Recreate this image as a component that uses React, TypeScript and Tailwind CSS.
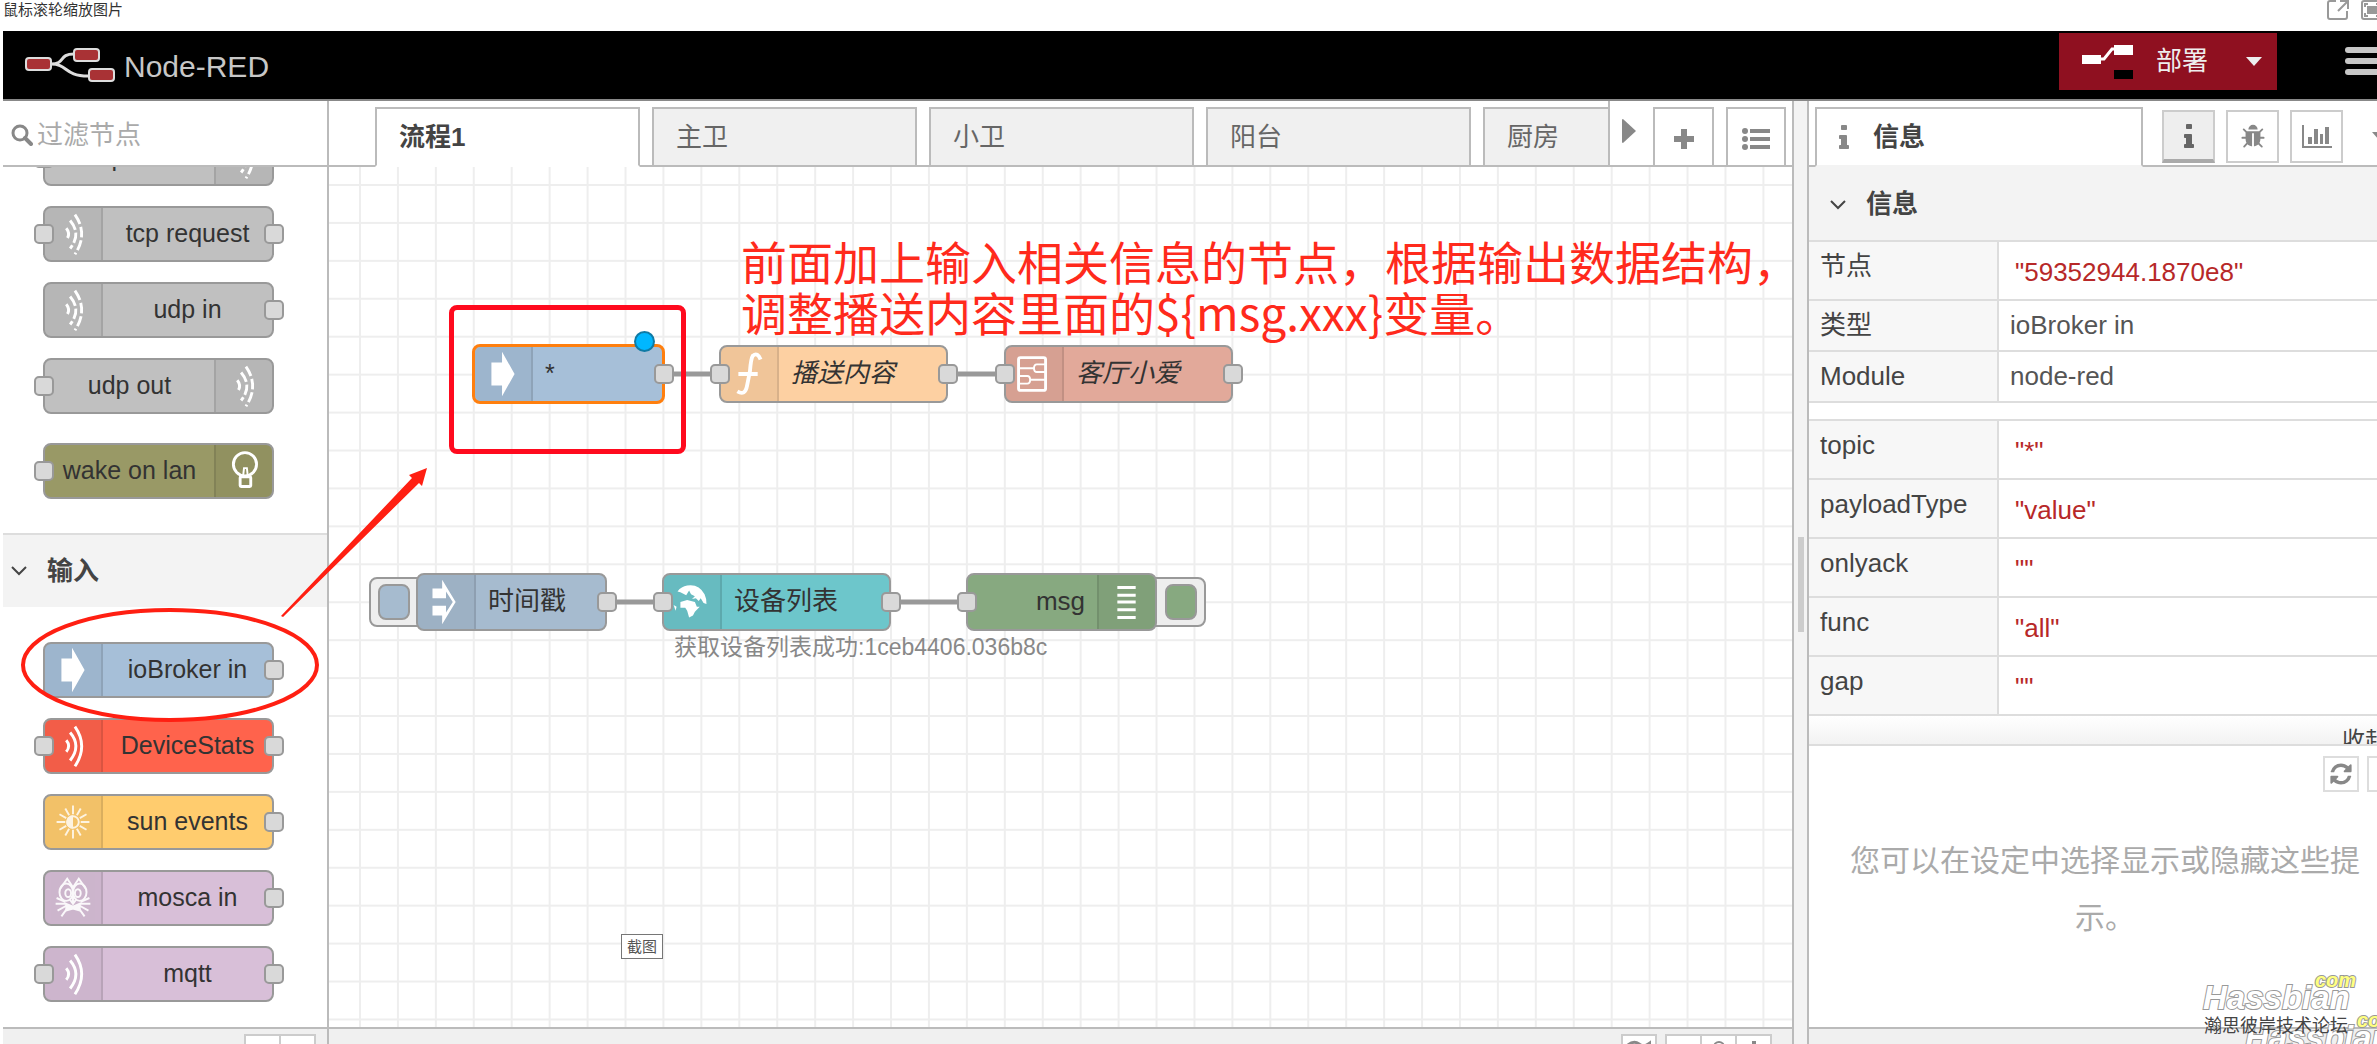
import type { ReactNode } from 'react';
import { clsx } from 'clsx';

/* ---------- node icons, drawn in a 58x54 box ---------- */

function NodeIcon({ children }: { children: ReactNode }) {
  return (
    <svg viewBox="0 0 58 54" className="h-[54px] w-[58px]" fill="none" stroke="#fff" strokeWidth="3">
      {children}
    </svg>
  );
}

const WAVES = (
  <>
    <path d="M31 7Q45 27 31 48" />
    <path d="M26 13Q38 27 26 42" />
    <path d="M22 21Q27 27 22 33" />
  </>
);

const icons: Record<string, ReactNode> = {
  waves: <NodeIcon>{WAVES}</NodeIcon>,
  dashes: (
    <NodeIcon>
      <g strokeDasharray="11 3">{WAVES}</g>
    </NodeIcon>
  ),
  arrow: (
    <NodeIcon>
      <path d="M17 15H28V4L41 27L28 50V39H17Z" fill="#fff" stroke="none" />
    </NodeIcon>
  ),
  inject: (
    <NodeIcon>
      <path
        d="M25 4L39 27L25 50V41H15V31H29V38L36 27L29 16V23H15V13H25Z"
        fill="#fff"
        stroke="none"
      />
    </NodeIcon>
  ),
  bulb: (
    <NodeIcon>
      <circle cx="30" cy="20" r="12" strokeWidth="3" />
      <rect x="25" y="33" width="11" height="10" rx="1" />
      <path d="M28 33L29 24H32L33 33" strokeWidth="2" />
    </NodeIcon>
  ),
  sun: (
    <NodeIcon>
      <g opacity="0.8">
        <circle cx="29" cy="27" r="6" strokeWidth="2" />
        <path d="M29 20A7 7 0 0 0 29 34Z" fill="#fff" stroke="none" />
        <path
          strokeWidth="2"
          d="M29 19V10M29 35V44M21 27H12M37 27H46M25 20L21 13M33 34L37 41M33 20L37 13M25 34L21 41M22 23L15 19M36 31L43 35M36 23L43 19M22 31L15 35"
        />
      </g>
    </NodeIcon>
  ),
  mosca: (
    <NodeIcon>
      <g opacity="0.9" strokeWidth="2">
        <path d="M16 17L23 7L29 16L35 7L42 17" />
        <ellipse cx="22" cy="21" rx="7" ry="9" />
        <ellipse cx="36" cy="21" rx="7" ry="9" />
        <ellipse cx="24" cy="22" rx="3" ry="4" />
        <ellipse cx="34" cy="22" rx="3" ry="4" />
        <path d="M29 18V32M26 29L29 33L32 29M12 27L21 31M11 33L22 33M13 40L22 35M46 27L37 31M47 33L36 33M45 40L36 35" />
        <path d="M22 33L29 36L36 33V40L29 38L22 40Z" fill="#fff" />
        <path d="M22 39L17 46M36 39L41 46" />
      </g>
    </NodeIcon>
  ),
  fn: (
    <NodeIcon>
      <path d="M41 12Q38 4 33 8Q31 11 30 24L27 39Q25 50 17 45M18 27H38" strokeWidth="4" />
    </NodeIcon>
  ),
  subflow: (
    <NodeIcon>
      <rect x="13" y="10" width="28" height="34" rx="2" />
      <path
        d="M13 21H29M41 17H32Q29 17 29 21T32 25H41M13 29H22Q25 29 25 33T22 37H13M25 33H41"
        strokeWidth="2"
      />
    </NodeIcon>
  ),
  globe: (
    <NodeIcon>
      <g fill="#fff" stroke="none">
        <path d="M14 16Q18 11 24 10Q36 8 42 19Q44 23 44 29L41 28L38 23L36 26L33 23L29 24L32 21L28 19L26 15L23 20L17 17Z" />
        <path d="M17 27L24 25L32 27L34 32L37 32L32 37L30 41L26 43L24 36L22 33L17 33Z" />
        <path d="M10 30L13 32L12 36Z" />
      </g>
    </NodeIcon>
  ),
  debug: (
    <NodeIcon>
      <path d="M19 12H38M19 20H38M19 27H38M19 35H38M19 43H38" />
    </NodeIcon>
  ),
};

/* ---------- flow nodes ---------- */

function Port({ side }: { side: 'left' | 'right' }) {
  return (
    <span
      className={clsx(
        'absolute top-1/2 size-5 -translate-y-1/2 rounded-[5px] border-2 border-[#999] bg-[#d9d9d9]',
        side === 'left' ? '-left-[11px]' : '-right-3',
      )}
    />
  );
}

interface FlowNodeProps {
  label: string;
  color: string;
  icon: string;
  input?: boolean;
  output?: boolean;
  iconRight?: boolean;
  selected?: boolean;
  className?: string;
  labelClassName?: string;
}

function FlowNode({
  label,
  color,
  icon,
  input,
  output,
  iconRight,
  selected,
  className,
  labelClassName,
}: FlowNodeProps) {
  return (
    <div
      className={clsx(
        'relative flex rounded-lg',
        selected ? 'border-[3px] border-[#ff7f0e]' : 'border-2 border-[#999]',
        iconRight && 'flex-row-reverse',
        color,
        className,
      )}
    >
      <span
        className={clsx(
          'flex w-[58px] shrink-0 items-center overflow-hidden border-black/10 bg-black/5',
          iconRight ? 'rounded-r-md border-l-2' : 'rounded-l-md border-r-2',
        )}
      >
        {icons[icon]}
      </span>
      <span
        className={clsx(
          'flex-1 self-center pb-0.5 whitespace-nowrap text-[25px] leading-8 text-[#333]',
          labelClassName ?? 'text-center',
        )}
      >
        {label}
      </span>
      {input && <Port side="left" />}
      {output && <Port side="right" />}
    </div>
  );
}

const networkNodes: FlowNodeProps[] = [
  { label: 'tcp out', color: 'bg-[#c0c0c0]', icon: 'dashes', input: true, iconRight: true },
  { label: 'tcp request', color: 'bg-[#c0c0c0]', icon: 'dashes', input: true, output: true },
  { label: 'udp in', color: 'bg-[#c0c0c0]', icon: 'dashes', output: true },
  { label: 'udp out', color: 'bg-[#c0c0c0]', icon: 'dashes', input: true, iconRight: true },
];

const inputNodes: FlowNodeProps[] = [
  { label: 'ioBroker in', color: 'bg-[#a6bfd8]', icon: 'arrow', output: true },
  { label: 'DeviceStats', color: 'bg-[#ff634c]', icon: 'waves', input: true, output: true },
  { label: 'sun events', color: 'bg-[#ffcc6e]', icon: 'sun', output: true },
  { label: 'mosca in', color: 'bg-[#d8bfd8]', icon: 'mosca', output: true },
  { label: 'mqtt', color: 'bg-[#d8bfd8]', icon: 'waves', input: true, output: true },
];

/* ---------- header ---------- */

function Header() {
  return (
    <header className="flex h-[70px] shrink-0 items-start justify-between border-b-2 border-[#888] bg-black">
      <div className="flex h-[68px] items-center gap-2 pl-[21px]">
        <svg viewBox="0 0 92 36" className="h-9 w-[92px]" fill="none" stroke="#ddd" strokeWidth="2">
          <path d="M27 17C42 17 34 7 50 7M27 17C44 17 40 29 64 29" strokeWidth="3" />
          <g fill="#a93235">
            <rect x="2" y="11" width="25" height="12" rx="3" />
            <rect x="50" y="2" width="25" height="12" rx="3" />
            <rect x="65" y="22" width="25" height="12" rx="3" />
          </g>
        </svg>
        <span className="pt-1 text-[30px] leading-10 text-[#c7c7c7]">Node-RED</span>
      </div>
      <div className="flex overflow-hidden">
        <button className="mt-0.5 mr-[68px] flex h-[57px] w-[218px] items-center bg-[#8f1020] text-[26px] text-[#eee]">
          <svg viewBox="0 0 52 36" className="ml-[23px] h-9 w-[52px]">
            <path d="M18 15H22L30 5H34" fill="none" stroke="#fff" strokeWidth="3" />
            <path d="M0 11H19V20H0ZM32 1H51V11H32Z" fill="#fff" />
            <path d="M32 26H51V35H32Z" fill="#000" />
          </svg>
          <span className="ml-[22px]">部署</span>
          <svg viewBox="0 0 16 9" className="ml-[38px] h-[9px] w-4">
            <path d="M0 0H16L8 9Z" fill="#eee" />
          </svg>
        </button>
        <button aria-label="菜单" className="-mr-1 mt-4 flex w-9 flex-col gap-[5px] self-start">
          <span className="h-1.5 rounded-sm bg-[#c7c7c7]" />
          <span className="h-1.5 rounded-sm bg-[#c7c7c7]" />
          <span className="h-1.5 rounded-sm bg-[#c7c7c7]" />
        </button>
      </div>
    </header>
  );
}

/* ---------- palette ---------- */

function Chevron() {
  return (
    <svg viewBox="0 0 16 10" className="h-2.5 w-4" fill="none" stroke="#444" strokeWidth="2">
      <path d="M1 1L8 8L15 1" />
    </svg>
  );
}

function Palette() {
  return (
    <aside className="flex w-[326px] shrink-0 flex-col border-r-2 border-[#bbb]">
      <label className="flex h-[66px] shrink-0 items-center gap-1 border-b-2 border-[#bbb] pt-1 pl-2">
        <svg viewBox="0 0 22 22" className="size-[22px] shrink-0" fill="none" stroke="#888">
          <circle cx="9" cy="9" r="7" strokeWidth="3" />
          <path d="M14 14L20 20" strokeWidth="4" strokeLinecap="round" />
        </svg>
        <input
          type="search"
          placeholder="过滤节点"
          className="w-full text-[26px] leading-9 outline-none placeholder:text-[#aaa]"
        />
      </label>
      <div className="min-h-0 flex-1 overflow-hidden">
        <div className="-mt-[37px] flex flex-col gap-5 pl-10">
          {networkNodes.map((node) => (
            <FlowNode key={node.label} {...node} className="h-14 w-[231px]" />
          ))}
          <FlowNode
            label="wake on lan"
            color="bg-[#999966]"
            icon="bulb"
            input
            iconRight
            className="mt-[9px] h-14 w-[231px]"
          />
        </div>
        <h2 className="mt-[34px] flex h-[74px] items-center gap-5 border-t-2 border-[#ddd] bg-[#f3f3f3] pl-2 text-[26px] font-bold text-[#444]">
          <Chevron />
          输入
        </h2>
        <div className="mt-[35px] flex flex-col gap-5 pl-10">
          {inputNodes.map((node) => (
            <FlowNode key={node.label} {...node} className="h-14 w-[231px]" />
          ))}
        </div>
      </div>
      <footer className="flex h-[17px] shrink-0 justify-end overflow-hidden border-t-2 border-[#bbb] bg-[#f0f0f0] pt-[5px] pr-[11px]">
        <button aria-label="折叠" className="h-9 w-[37px] border-2 border-[#ccc] bg-white" />
        <button aria-label="展开" className="-ml-0.5 h-9 w-[37px] border-2 border-[#ccc] bg-white" />
      </footer>
    </aside>
  );
}

/* ---------- workspace ---------- */

const flows = ['流程1', '主卫', '小卫', '阳台', '厨房'];

function FlowTabs() {
  return (
    <div className="flex h-[66px] shrink-0 shadow-[inset_0_-2px_0_#bbb]">
      <div role="tablist" className="flex min-w-0 flex-1 items-end gap-3 overflow-hidden pl-[46px]">
        {flows.map((flow, index) => (
          <button
            key={flow}
            role="tab"
            aria-selected={index === 0}
            className={clsx(
              'h-[60px] w-[265px] shrink-0 border-2 border-[#bbb] pl-[22px] text-left text-[26px]',
              index === 0
                ? 'border-b-white bg-white font-bold text-[#444]'
                : 'bg-[#f0f0f0] text-[#666]',
            )}
          >
            {flow}
          </button>
        ))}
      </div>
      <div className="flex items-end border-l-2 border-[#bbb] pr-1.5">
        <button aria-label="向右滚动" className="h-[60px] w-[43px] pb-3 pl-3">
          <svg viewBox="0 0 14 24" className="h-6 w-3.5">
            <path d="M0 1Q0 0 1 0L14 12L1 24Q0 24 0 23Z" fill="#888" />
          </svg>
        </button>
        <button
          aria-label="添加流程"
          className="mr-3 flex h-[60px] w-[61px] items-center justify-center border-2 border-[#bbb] bg-white"
        >
          <svg viewBox="0 0 22 22" className="mt-1 size-[22px]" stroke="#888" strokeWidth="6">
            <path d="M1 11H21M11 1V21" />
          </svg>
        </button>
        <button
          aria-label="流程列表"
          className="flex h-[60px] w-[60px] items-center justify-center border-2 border-[#bbb] bg-white"
        >
          <svg viewBox="0 0 28 22" className="mt-1 h-[22px] w-7" fill="#888">
            <path d="M8 1H28V5H8ZM8 9H28V13H8ZM8 17H28V21H8Z" />
            <circle cx="3" cy="3" r="3" />
            <circle cx="3" cy="11" r="3" />
            <circle cx="3" cy="19" r="3" />
          </svg>
        </button>
      </div>
    </div>
  );
}

function Canvas() {
  return (
    <div className="relative min-h-0 flex-1 overflow-hidden bg-white">
      <svg className="absolute inset-0 size-full">
        <defs>
          <pattern id="grid" x="30" y="17" width="37.93" height="37.93" patternUnits="userSpaceOnUse">
            <path d="M1 0V38M0 1H38" stroke="#eee" strokeWidth="2" />
          </pattern>
        </defs>
        <rect width="100%" height="100%" fill="url(#grid)" />
        <path d="M335 207H395M620 207H680M278 435H330M562 435H640" stroke="#999" strokeWidth="5" />
      </svg>

      <FlowNode
        label="*"
        color="bg-[#a6bfd8]"
        icon="arrow"
        output
        selected
        className="absolute! top-[177px] left-[143px] h-[60px] w-[193px]"
        labelClassName="pl-3"
      />
      <span className="absolute top-[164px] left-[305px] size-[21px] rounded-full border-2 border-[#0f7aa5] bg-[#00b7ff]" />
      <FlowNode
        label="播送内容"
        color="bg-[#fdd0a2]"
        icon="fn"
        input
        output
        className="absolute! top-[178px] left-[390px] h-[58px] w-[229px]"
        labelClassName="pl-3 text-[26px]! italic"
      />
      <FlowNode
        label="客厅小爱"
        color="bg-[#e2a99a]"
        icon="subflow"
        input
        output
        className="absolute! top-[178px] left-[675px] h-[58px] w-[229px]"
        labelClassName="pl-3 text-[26px]! italic"
      />

      <div className="absolute top-[410px] left-10 h-[50px] w-16 rounded-lg border-2 border-[#999] bg-[#eee] py-[5px] pl-[7px]">
        <button
          aria-label="注入"
          className="h-9 w-8 rounded-lg border-2 border-[#999] bg-[#a6bbcf]"
        />
      </div>
      <FlowNode
        label="时间戳"
        color="bg-[#a6bbcf]"
        icon="inject"
        output
        className="absolute! top-[406px] left-[87px] h-[58px] w-[191px]"
        labelClassName="pl-3 text-[26px]!"
      />
      <FlowNode
        label="设备列表"
        color="bg-[#6dc6cb]"
        icon="globe"
        input
        output
        className="absolute! top-[406px] left-[333px] h-[58px] w-[229px]"
        labelClassName="pl-3 text-[26px]!"
      />
      <p className="absolute top-[464px] left-[345px] text-[23px] leading-8 whitespace-nowrap text-[#888]">
        获取设备列表成功:1ceb4406.036b8c
      </p>
      <div className="absolute top-[410px] left-[813px] flex h-[50px] w-16 justify-end rounded-lg border-2 border-[#999] bg-[#eee] py-[5px] pr-[7px]">
        <button
          aria-label="调试"
          className="h-9 w-8 rounded-lg border-2 border-[#999] bg-[#87a980]"
        />
      </div>
      <FlowNode
        label="msg"
        color="bg-[#87a980]"
        icon="debug"
        input
        iconRight
        className="absolute! top-[406px] left-[637px] h-[58px] w-[191px]"
        labelClassName="pr-3 text-right text-[26px]!"
      />

      {/* notes laid over the flow */}
      <p className="absolute top-[68px] left-[412px] font-['Noto_Sans_CJK_SC',sans-serif] text-[46px] leading-[51px] whitespace-nowrap text-[#ff2a1c]">
        前面加上输入相关信息的节点，根据输出数据结构，
        <br />
        调整播送内容里面的{'${msg.xxx}'}变量。
      </p>
      <div className="absolute top-[138px] left-[120px] h-[149px] w-[237px] rounded-lg border-[5px] border-[#ff0a1e]" />
      <span className="absolute top-[767px] left-[292px] border border-[#767676] bg-white px-[5px] text-[15px] leading-[23px] text-[#555]">
        截图
      </span>
    </div>
  );
}

function WorkspaceFooter() {
  return (
    <footer className="flex h-[17px] shrink-0 justify-end overflow-hidden border-t-2 border-[#bbb] bg-[#f0f0f0] pt-[5px] pr-5">
      <button
        aria-label="导航器"
        className="mr-2 flex h-9 w-9 justify-center border-2 border-[#ccc] bg-white pt-1"
      >
        <svg viewBox="0 0 24 20" className="h-5 w-6" fill="none" stroke="#888" strokeWidth="3">
          <path d="M1 5Q7 0 12 4T23 3V18" />
        </svg>
      </button>
      <button aria-label="缩小" className="h-9 w-[37px] border-2 border-[#ccc] bg-white" />
      <button
        aria-label="重置缩放"
        className="-ml-0.5 flex h-9 w-[37px] justify-center border-2 border-[#ccc] bg-white pt-[5px]"
      >
        <span className="size-3 rounded-full border-2 border-[#888]" />
      </button>
      <button
        aria-label="放大"
        className="-ml-0.5 flex h-9 w-[37px] justify-center border-2 border-[#ccc] bg-white pt-[5px]"
      >
        <span className="h-4 w-1 bg-[#888]" />
      </button>
    </footer>
  );
}

/* ---------- sidebar ---------- */

function InfoIcon() {
  return (
    <svg viewBox="0 0 640 1536" className="h-6 w-2.5" fill="currentColor">
      <path d="M640 1344v128q0 26-19 45t-45 19h-512q-26 0-45-19t-19-45v-128q0-26 19-45t45-19h64v-384h-64q-26 0-45-19t-19-45v-128q0-26 19-45t45-19h384q26 0 45 19t19 45v576h64q26 0 45 19t19 45zm-128-1280v192q0 26-19 45t-45 19h-256q-26 0-45-19t-19-45v-192q0-26 19-45t45-19h256q26 0 45 19t19 45z" />
    </svg>
  );
}

function BugIcon() {
  return (
    <svg viewBox="0 0 1664 1792" className="h-[30px] w-[26px] pb-1" fill="currentColor">
      <path d="M1632 1088q0 26-19 45t-45 19h-224q0 171-67 290l208 209q19 19 19 45t-19 45q-18 19-45 19t-45-19l-198-197q-5 5-15 13t-42 28.500-65 36.500-82 29-97 13v-896h-128v896q-51 0-101.500-13.500t-87-33-66-39-43.500-32.500l-15-14-183 207q-20 21-48 21-24 0-43-16-19-18-20.500-44.500t15.500-46.500l202-227q-58-114-58-274h-224q-26 0-45-19t-19-45 19-45 45-19h224v-294l-173-173q-19-19-19-45t19-45 45-19 45 19l173 173h844l173-173q19-19 45-19t45 19 19 45-19 45l-173 173v294h224q26 0 45 19t19 45zm-480-576h-640q0-133 93.500-226.500t226.500-93.500 226.500 93.500 93.500 226.500z" />
    </svg>
  );
}

function ChartIcon() {
  return (
    <svg viewBox="0 0 30 24" className="h-6 w-[30px]" fill="currentColor">
      <path d="M0 0H2V21H30V23H0ZM6 12H10V19H6ZM12 4H16V19H12ZM18 9H21V19H18ZM23 2H27V19H23Z" />
    </svg>
  );
}

function RefreshIcon() {
  return (
    <svg viewBox="100 100 1592 1592" className="size-[22px]" fill="#888">
      <path d="M1639 1056q0 5-1 7-64 268-268 434.500t-478 166.500q-146 0-282.500-55t-243.500-157l-129 129q-19 19-45 19t-45-19-19-45v-448q0-26 19-45t45-19h448q26 0 45 19t19 45-19 45l-137 137q71 66 161 102t187 36q134 0 250-65t186-179q11-17 53-117 8-23 30-23h192q13 0 22.500 9.500t9.500 22.500zm25-800v448q0 26-19 45t-45 19h-448q-26 0-45-19t-19-45 19-45l138-138q-148-137-349-137-134 0-250 65t-186 179q-11 17-53 117-8 23-30 23h-199q-13 0-22.500-9.500t-9.500-22.500v-7q65-268 270-434.500t480-166.500q146 0 284 55.500t245 156.500l130-129q19-19 45-19t45 19 19 45z" />
    </svg>
  );
}

interface InfoRow {
  name: string;
  value: string;
  quoted?: boolean;
}

const nodeRows: InfoRow[] = [
  { name: '节点', value: '59352944.1870e8', quoted: true },
  { name: '类型', value: 'ioBroker in' },
  { name: 'Module', value: 'node-red' },
];

const propertyRows: InfoRow[] = [
  { name: 'topic', value: '*', quoted: true },
  { name: 'payloadType', value: 'value', quoted: true },
  { name: 'onlyack', value: '', quoted: true },
  { name: 'func', value: 'all', quoted: true },
  { name: 'gap', value: '', quoted: true },
];

function InfoTable({ rows }: { rows: InfoRow[] }) {
  return (
    <table className="w-full table-fixed border-separate border-spacing-0 border-t-2 border-[#ddd] text-[26px] leading-9">
      <tbody>
        {rows.map((row) => (
          <tr key={row.name}>
            <th className="w-[190px] border-r-2 border-b-2 border-[#ddd] bg-[#f7f7f7] pt-1.5 pl-[11px] text-left align-top font-normal text-[#444]">
              {row.name}
            </th>
            <td
              className={clsx(
                'border-b-2 border-[#ddd]',
                row.quoted ? 'pt-3 pb-[9px] pl-4 text-[#b72828]' : 'pt-1.5 pb-[7px] pl-[11px] text-[#555]',
              )}
            >
              {row.quoted ? `"${row.value}"` : row.value}
            </td>
          </tr>
        ))}
      </tbody>
    </table>
  );
}

function Sidebar() {
  return (
    <aside className="flex w-[570px] shrink-0 flex-col overflow-hidden border-l-2 border-[#bbb]">
      <div className="flex h-[66px] shrink-0 items-end pl-1.5 shadow-[inset_0_-2px_0_#bbb]">
        <button
          role="tab"
          aria-selected
          className="flex h-[60px] w-[328px] shrink-0 items-center gap-6 border-2 border-[#bbb] border-b-[#f3f3f3] bg-white pl-[22px] text-[26px] font-bold text-[#444]"
        >
          <span className="text-[#888]">
            <InfoIcon />
          </span>
          信息
        </button>
        <div className="mb-1 ml-[19px] flex shrink-0 items-center gap-[11px] text-[#888]">
          <button
            aria-label="信息"
            className="flex h-[53px] w-[53px] items-center justify-center border-2 border-b-4 border-[#ccc] border-b-[#aaa] bg-[#eee] text-[#666]"
          >
            <InfoIcon />
          </button>
          <button aria-label="调试" className="flex h-[53px] w-[53px] items-center justify-center border-2 border-[#ccc]">
            <BugIcon />
          </button>
          <button aria-label="仪表盘" className="flex h-[53px] w-[53px] items-center justify-center border-2 border-[#ccc]">
            <ChartIcon />
          </button>
          <svg viewBox="0 0 16 9" className="ml-[18px] h-[9px] w-4" fill="currentColor">
            <path d="M0 0H16L8 9Z" />
          </svg>
        </div>
      </div>

      <div className="h-[577px] shrink-0 overflow-hidden bg-white">
        <h2 className="flex h-[73px] items-center gap-5 bg-[#f3f3f3] pt-0.5 pl-[21px] text-[26px] font-bold text-[#444]">
          <Chevron />
          信息
        </h2>
        <InfoTable rows={nodeRows} />
        <div className="mt-4">
          <InfoTable rows={propertyRows} />
        </div>
        <div className="flex h-[60px] justify-end bg-linear-to-b from-white to-[#e4e4e4] pt-2">
          <a href="#" className="-mr-[11px] text-[23px] leading-8 text-[#444]">
            收起
          </a>
        </div>
      </div>

      <section className="min-h-0 flex-1 overflow-hidden border-t-2 border-[#ddd] bg-white">
        <div className="-mr-[18px] flex justify-end gap-2 pt-[10px]">
          <button aria-label="下一条提示" className="flex h-9 w-9 items-center justify-center border-2 border-[#ddd]">
            <RefreshIcon />
          </button>
          <button aria-label="关闭提示" className="h-9 w-7 border-2 border-[#ddd]" />
        </div>
        <p className="pt-10 pl-6 text-center text-[30px] leading-[57px] text-[#aaa]">
          您可以在设定中选择显示或隐藏这些提示。
        </p>
      </section>
      <footer className="h-[17px] shrink-0 border-t-2 border-[#bbb] bg-[#f0f0f0]" />
    </aside>
  );
}

/* ---------- forum watermark ---------- */

function Hassbian({ className }: { className: string }) {
  return (
    <div className={clsx('absolute font-bold italic [paint-order:stroke]', className)}>
      <span className="text-[33px] leading-10 text-white [-webkit-text-stroke:2px_#999]">Hassbian</span>
      <span className="absolute -top-2.5 left-28 text-xl leading-6 text-[#ffff80] [-webkit-text-stroke:2px_#999]">
        com
      </span>
    </div>
  );
}

export default function App() {
  return (
    <div className="relative flex h-screen flex-col overflow-hidden bg-white pl-[3px] font-['Liberation_Sans','Noto_Sans_CJK_SC',sans-serif]">
      <div className="flex h-[31px] shrink-0 items-start justify-between overflow-hidden">
        <span className="text-[15px] leading-5 text-[#333]">鼠标滚轮缩放图片</span>
        <div className="-mr-1.5 flex gap-3">
          <svg viewBox="0 0 22 20" className="h-5 w-[22px]" fill="none" stroke="#999" strokeWidth="2">
            <path d="M9 1H3Q1 1 1 3V17Q1 19 3 19H18Q20 19 20 17V11M13 1H21V9M21 1L11 11" />
          </svg>
          <svg viewBox="0 0 22 20" className="h-5 w-[22px]" fill="none" stroke="#999" strokeWidth="2">
            <rect x="1" y="1" width="20" height="18" rx="2" />
            <path d="M4 7V4H7M15 4H18V7M18 13V16H15M7 16H4V13" />
            <rect x="7" y="7" width="8" height="6" fill="#999" />
          </svg>
        </div>
      </div>
      <Header />
      <div className="flex min-h-0 flex-1">
        <Palette />
        <main className="flex min-w-0 flex-1 flex-col border-r-2 border-[#bbb]">
          <FlowTabs />
          <Canvas />
          <WorkspaceFooter />
        </main>
        <div className="flex w-[13px] shrink-0 items-center justify-center bg-[#f3f3f3]">
          <span className="-mb-6 h-[95px] w-1.5 bg-[#ccc]" />
        </div>
        <Sidebar />
      </div>

      <svg className="pointer-events-none absolute inset-0 size-full">
        <ellipse cx="170" cy="665" rx="147" ry="55" fill="none" stroke="#ff1f12" strokeWidth="4" />
        <path d="M427 468L409 475L412 478L281 616L283 617L419 483L422 486Z" fill="#ff1f12" />
      </svg>

      <Hassbian className="top-[978px] left-[2203px]" />
      <Hassbian className="top-[1018px] left-[2245px]" />
      <p className="absolute top-[1014px] left-[2204px] text-[18px] leading-6 whitespace-nowrap text-[#444]">
        瀚思彼岸技术论坛
      </p>
    </div>
  );
}
